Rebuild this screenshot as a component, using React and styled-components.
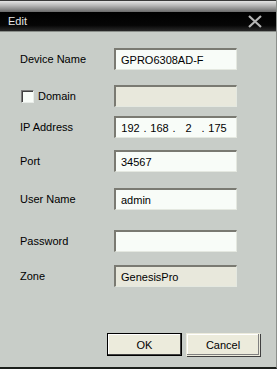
import React from 'react';
import styled, { createGlobalStyle } from 'styled-components';

const GlobalStyle = createGlobalStyle`
  html, body {
    margin: 0;
    padding: 0;
    background: #c8cdc8;
  }
  * {
    box-sizing: border-box;
  }
`;

const Window = styled.div`
  width: 277px;
  height: 369px;
  display: flex;
  flex-direction: column;
  background: #c8cdc8;
  border-right: 1px solid #8c908c;
  border-bottom: 2px solid #1c201c;
  font-family: "Liberation Sans", Arial, sans-serif;
  font-size: 11px;
  color: #000;
`;

const TitleTop = styled.div`
  height: 12px;
  border-top: 1px solid #3a3a3a;
  background: linear-gradient(#e4e4e4, #b8b8b8 40%, #6a6a6a);
`;

const TitleBar = styled.div`
  height: 20px;
  display: flex;
  align-items: center;
  justify-content: space-between;
  padding: 0 14px 0 8px;
  background: linear-gradient(#000 0%, #060606 70%, #2a2a2a 100%);
  border-bottom: 1px solid #8a8e8a;
`;

const Title = styled.span`
  color: #e6e6e6;
  font-size: 11px;
  margin-top: -2px;
`;

const Body = styled.div`
  flex: 1;
  display: flex;
  flex-direction: column;
  padding-left: 20px;
`;

const Row = styled.div`
  display: grid;
  grid-template-columns: 94px 123px;
  align-items: center;
  height: 22px;
  margin-top: ${({ $mt }) => $mt}px;
`;

const Label = styled.label`
  display: flex;
  align-items: center;
  gap: 4px;
`;

const Check = styled.span`
  width: 13px;
  height: 13px;
  margin-left: 1px;
  background: #f8fcf8;
  border-top: 1px solid #7c7c7c;
  border-left: 1px solid #7c7c7c;
  border-right: 1px solid #e8ece8;
  border-bottom: 1px solid #e8ece8;
  box-shadow: inset 1px 1px 0 #404040;
`;

const Field = styled.div`
  height: 22px;
  display: flex;
  align-items: center;
  padding-left: ${({ $pad = 5 }) => $pad}px;
  background: ${({ $disabled }) => ($disabled ? '#e8e8dc' : '#f8fcf8')};
  border-top: 2px solid #7a7a72;
  border-left: 2px solid #7a7a72;
  border-right: 1px solid #e4e8e0;
  border-bottom: 1px solid #e4e8e0;
  white-space: nowrap;
  overflow: hidden;
`;

const IpSeg = styled.span`
  width: 23px;
  text-align: center;
`;

const IpDot = styled.span`
  width: 6px;
  text-align: center;
`;

const Footer = styled.div`
  display: flex;
  justify-content: flex-end;
  gap: 4px;
  padding: 0 16px 11px 0;
`;

const Button = styled.button`
  width: ${({ $w }) => $w}px;
  height: 23px;
  font: inherit;
  color: #000;
  background: #ecebdc;
  border: 1px solid ${({ $default }) => ($default ? '#000' : '#ecebdc')};
  box-shadow: ${({ $default }) =>
    $default
      ? 'inset -1px -1px 0 #404040, inset 1px 1px 0 #fff'
      : 'inset -1px -1px 0 #808080, inset 1px 1px 0 #fff, 1px 1px 0 #404040'};
  padding: 0;
`;

const CloseIcon = () => (
  <svg width="14" height="13" viewBox="0 0 14 13">
    <path d="M1 1 L13 12 M13 1 L1 12" stroke="#b4b4b4" strokeWidth="2.2" fill="none" />
  </svg>
);

const App = () => (
  <>
    <GlobalStyle />
    <Window>
      <TitleTop />
      <TitleBar>
        <Title>Edit</Title>
        <CloseIcon />
      </TitleBar>
      <Body>
        <Row $mt={16}>
          <Label>Device Name</Label>
          <Field>GPRO6308AD-F</Field>
        </Row>
        <Row $mt={15}>
          <Label><Check />Domain</Label>
          <Field $disabled />
        </Row>
        <Row $mt={9}>
          <Label>IP Address</Label>
          <Field $pad={3}>
            <IpSeg>192</IpSeg><IpDot>.</IpDot>
            <IpSeg>168</IpSeg><IpDot>.</IpDot>
            <IpSeg>2</IpSeg><IpDot>.</IpDot>
            <IpSeg>175</IpSeg>
          </Field>
        </Row>
        <Row $mt={12}>
          <Label>Port</Label>
          <Field>34567</Field>
        </Row>
        <Row $mt={16}>
          <Label>User Name</Label>
          <Field>admin</Field>
        </Row>
        <Row $mt={20}>
          <Label>Password</Label>
          <Field />
        </Row>
        <Row $mt={13}>
          <Label>Zone</Label>
          <Field $disabled>GenesisPro</Field>
        </Row>
      </Body>
      <Footer>
        <Button $default $w={75}>OK</Button>
        <Button $w={74}>Cancel</Button>
      </Footer>
    </Window>
  </>
);

export default App;
